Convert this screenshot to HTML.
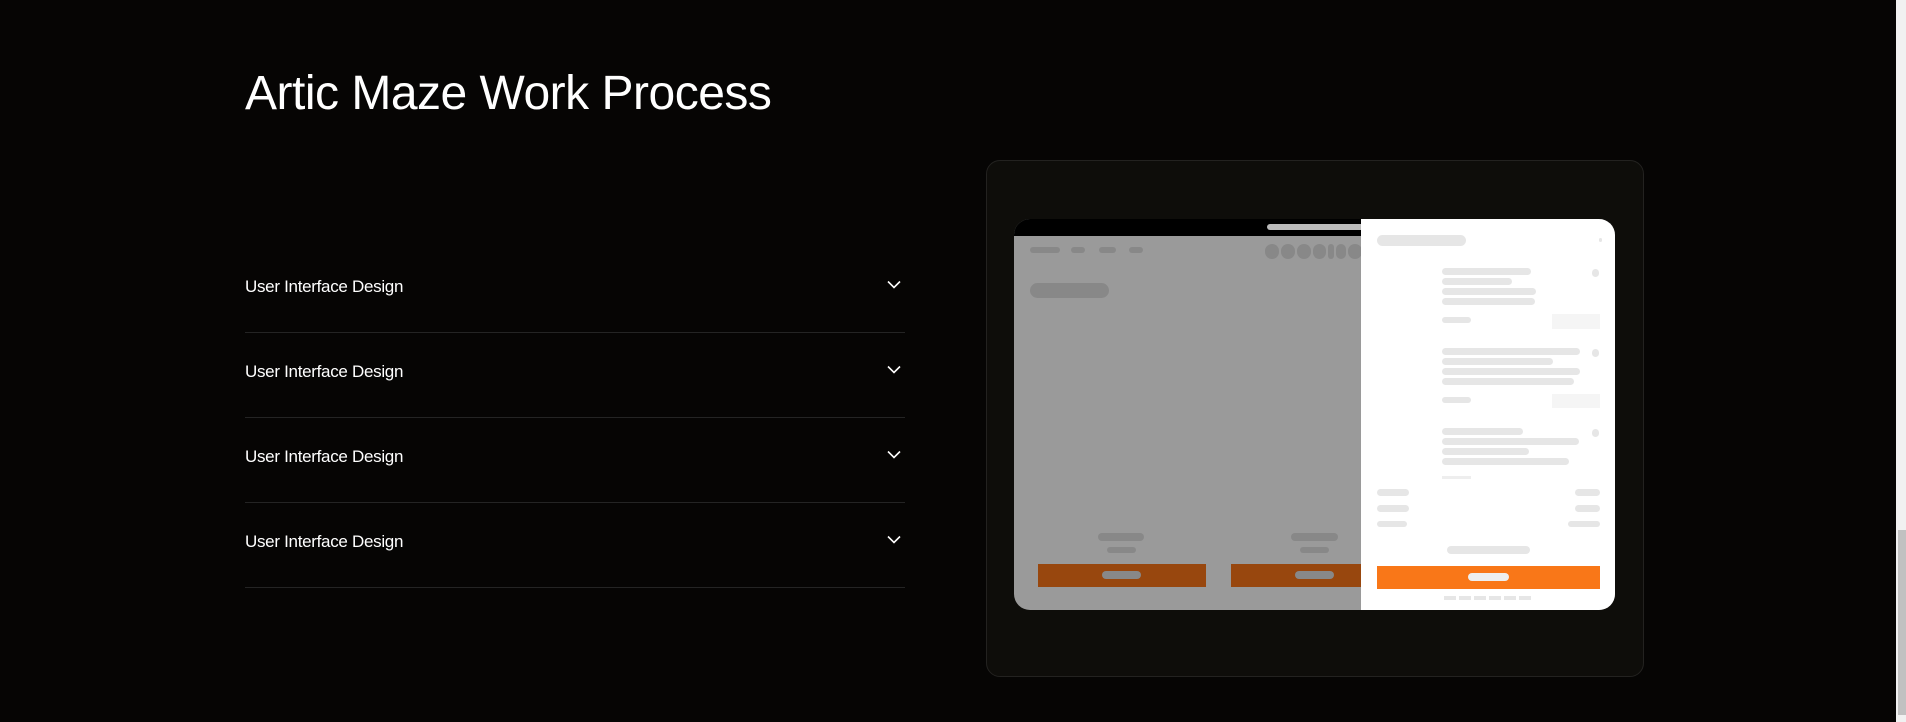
<!DOCTYPE html>
<html><head><meta charset="utf-8"><style>
*{margin:0;padding:0;box-sizing:border-box}
body{width:1906px;height:722px;background:#060504;overflow:hidden;position:relative;font-family:"Liberation Sans",sans-serif;color:#fff}
.a{position:absolute}
h1{position:absolute;left:245px;top:66px;font-weight:400;font-size:48px;white-space:nowrap;letter-spacing:-0.5px}
.item{position:absolute;left:245px;width:660px;height:85px;border-bottom:1px solid #242424}
.item span{position:absolute;left:0;top:29px;font-size:17px;letter-spacing:-0.3px}
.item svg{position:absolute;left:642px;top:32px}
.p{position:absolute;border-radius:4px}
.g{background:#888}
.l{background:#e6e6e6}
</style></head><body>
<h1>Artic Maze Work Process</h1>
<div class="item" style="top:248px"><span>User Interface Design</span><svg width="14" height="9" viewBox="0 0 14 9"><path d="M1 1.5L7 7.5L13 1.5" stroke="#fff" stroke-width="1.6" fill="none"/></svg></div>
<div class="item" style="top:333px"><span>User Interface Design</span><svg width="14" height="9" viewBox="0 0 14 9"><path d="M1 1.5L7 7.5L13 1.5" stroke="#fff" stroke-width="1.6" fill="none"/></svg></div>
<div class="item" style="top:418px"><span>User Interface Design</span><svg width="14" height="9" viewBox="0 0 14 9"><path d="M1 1.5L7 7.5L13 1.5" stroke="#fff" stroke-width="1.6" fill="none"/></svg></div>
<div class="item" style="top:503px"><span>User Interface Design</span><svg width="14" height="9" viewBox="0 0 14 9"><path d="M1 1.5L7 7.5L13 1.5" stroke="#fff" stroke-width="1.6" fill="none"/></svg></div>

<div class="a" style="left:986px;top:160px;width:658px;height:517px;background:#0e0d0a;border:1px solid #232220;border-radius:14px"></div>
<div class="a" style="left:1014px;top:219px;width:601px;height:391px;border-radius:16px;overflow:hidden;background:#9a9a9a">
 <div class="a" style="left:0;top:0;width:601px;height:17px;background:#000"></div>
 <div class="p" style="left:253px;top:5px;width:100px;height:6px;background:#bbb"></div>
</div>
<div class="p g" style="left:1030px;top:247px;width:30px;height:6px"></div>
<div class="p g" style="left:1071px;top:247px;width:14px;height:6px"></div>
<div class="p g" style="left:1099px;top:247px;width:17px;height:6px"></div>
<div class="p g" style="left:1129px;top:247px;width:14px;height:6px"></div>
<div class="a" style="left:1265px;top:244px;width:96px;height:15px;overflow:hidden">
 <div class="a g" style="left:0;top:0;width:14px;height:15px;border-radius:7px"></div>
 <div class="a g" style="left:16px;top:0;width:14px;height:15px;border-radius:7px"></div>
 <div class="a g" style="left:32px;top:0;width:14px;height:15px;border-radius:7px"></div>
 <div class="a g" style="left:48px;top:0;width:13px;height:15px;border-radius:7px"></div>
 <div class="a g" style="left:63px;top:0;width:6px;height:15px;border-radius:3px"></div>
 <div class="a g" style="left:71px;top:0;width:10px;height:15px;border-radius:5px"></div>
 <div class="a g" style="left:83px;top:0;width:14px;height:15px;border-radius:7px"></div>
</div>
<div class="p g" style="left:1030px;top:283px;width:79px;height:15px;border-radius:8px"></div>
<div class="p g" style="left:1098px;top:533px;width:46px;height:8px"></div>
<div class="p g" style="left:1107px;top:547px;width:29px;height:6px"></div>
<div class="p g" style="left:1291px;top:533px;width:47px;height:8px"></div>
<div class="p g" style="left:1300px;top:547px;width:29px;height:6px"></div>
<div class="a" style="left:1038px;top:564px;width:168px;height:23px;background:#98470e"></div>
<div class="p g" style="left:1102px;top:571px;width:39px;height:8px"></div>
<div class="a" style="left:1231px;top:564px;width:130px;height:23px;background:#98470e"></div>
<div class="p g" style="left:1295px;top:571px;width:39px;height:8px"></div>
<div class="a" style="left:1361px;top:219px;width:254px;height:391px;background:#fff;border-radius:0 16px 16px 0"></div>
<div class="p l" style="left:1377px;top:235px;width:89px;height:11px;border-radius:6px"></div>
<div class="p l" style="left:1599px;top:238px;width:3px;height:4px"></div>
<div class="p l" style="left:1442px;top:268px;width:89px;height:7px"></div>
<div class="p l" style="left:1442px;top:278px;width:70px;height:7px"></div>
<div class="p l" style="left:1442px;top:288px;width:94px;height:7px"></div>
<div class="p l" style="left:1442px;top:298px;width:93px;height:7px"></div>
<div class="p l" style="left:1592px;top:269px;width:7px;height:8px"></div>
<div class="p l" style="left:1442px;top:317px;width:29px;height:6px"></div>
<div class="a" style="left:1552px;top:314px;width:48px;height:15px;background:#f5f5f5"></div>
<div class="p l" style="left:1442px;top:348px;width:138px;height:7px"></div>
<div class="p l" style="left:1442px;top:358px;width:111px;height:7px"></div>
<div class="p l" style="left:1442px;top:368px;width:138px;height:7px"></div>
<div class="p l" style="left:1442px;top:378px;width:132px;height:7px"></div>
<div class="p l" style="left:1592px;top:349px;width:7px;height:8px"></div>
<div class="p l" style="left:1442px;top:397px;width:29px;height:6px"></div>
<div class="a" style="left:1552px;top:394px;width:48px;height:14px;background:#f5f5f5"></div>
<div class="p l" style="left:1442px;top:428px;width:81px;height:7px"></div>
<div class="p l" style="left:1442px;top:438px;width:137px;height:7px"></div>
<div class="p l" style="left:1442px;top:448px;width:87px;height:7px"></div>
<div class="p l" style="left:1442px;top:458px;width:127px;height:7px"></div>
<div class="p l" style="left:1592px;top:429px;width:7px;height:8px"></div>
<div class="a" style="left:1442px;top:476px;width:29px;height:3px;background:#eee"></div>
<div class="p l" style="left:1377px;top:489px;width:32px;height:7px"></div>
<div class="p l" style="left:1575px;top:489px;width:25px;height:7px"></div>
<div class="p l" style="left:1377px;top:505px;width:32px;height:7px"></div>
<div class="p l" style="left:1575px;top:505px;width:25px;height:7px"></div>
<div class="p l" style="left:1377px;top:521px;width:30px;height:6px"></div>
<div class="p l" style="left:1568px;top:521px;width:32px;height:6px"></div>
<div class="p l" style="left:1447px;top:546px;width:83px;height:8px"></div>
<div class="a" style="left:1377px;top:566px;width:223px;height:23px;background:#f97718"></div>
<div class="p" style="left:1468px;top:573px;width:41px;height:8px;background:#eee"></div>
<div class="a" style="left:1444px;top:596px;width:88px;height:4px;background:repeating-linear-gradient(90deg,#e6e6e6 0 12px,transparent 12px 15px)"></div>
<div class="a" style="left:1896px;top:0;width:10px;height:722px;background:#f1f1f1"></div>
<div class="a" style="left:1898px;top:530px;width:8px;height:185px;background:#c1c1c1"></div>
</body></html>
